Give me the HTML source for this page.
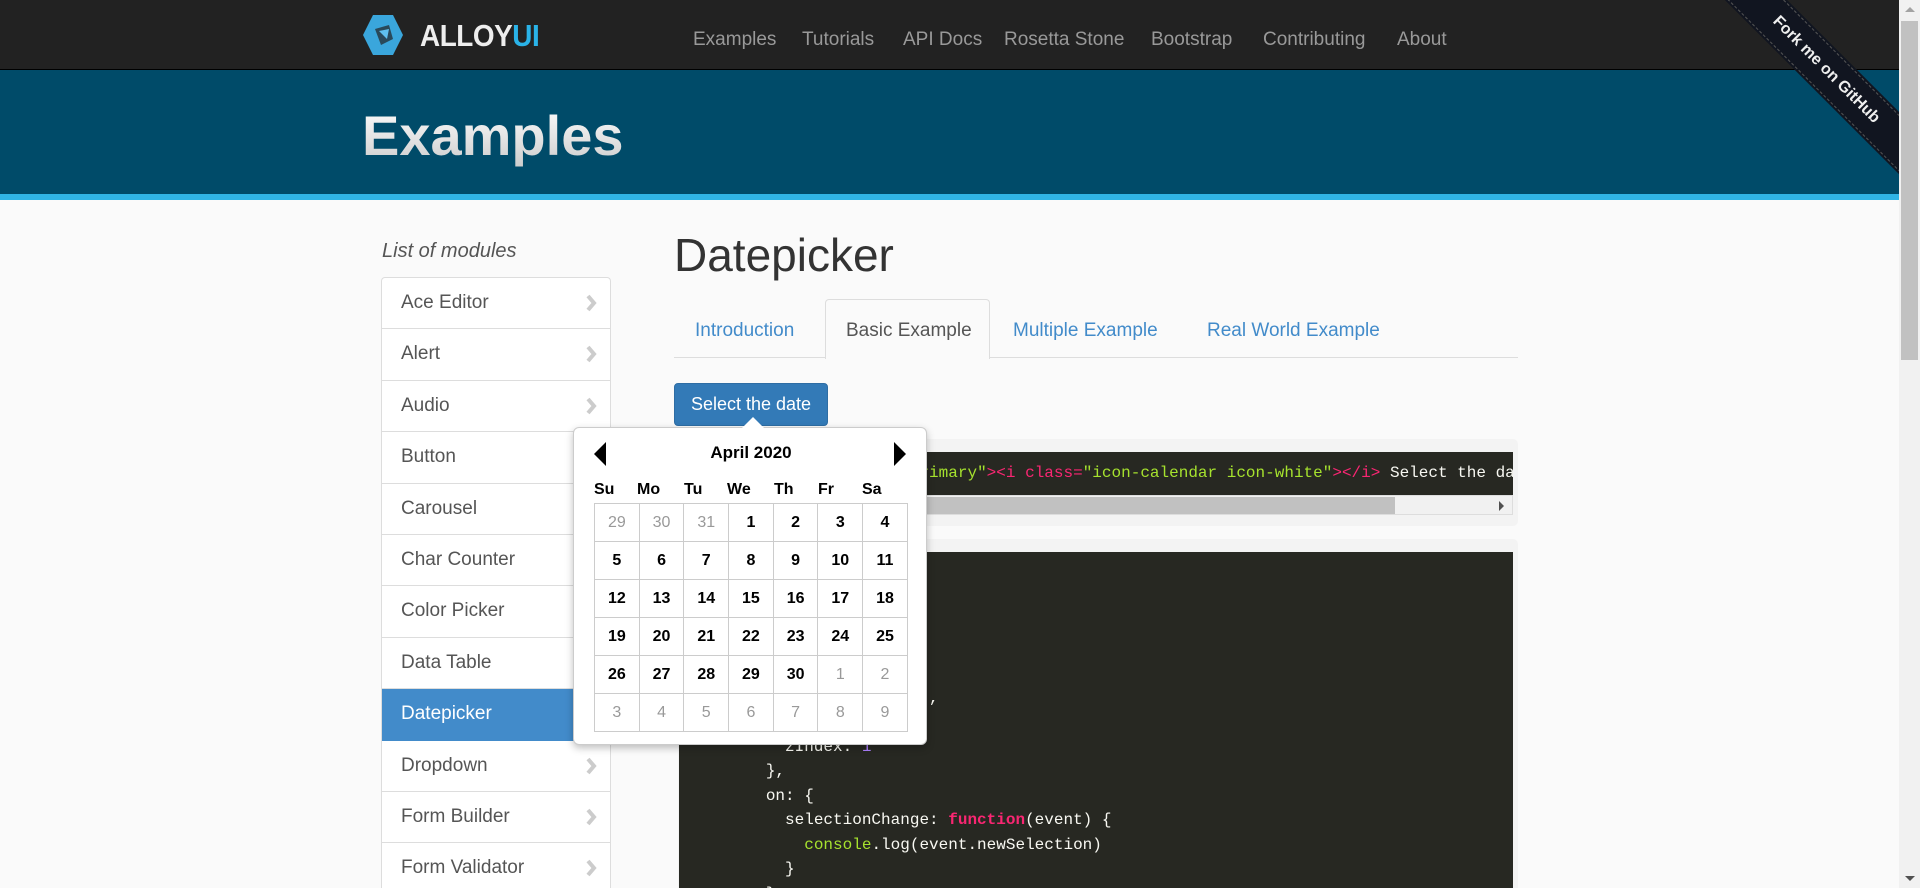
<!DOCTYPE html>
<html style="height:888px;overflow:hidden"><head><meta charset="utf-8">
<style>
*{margin:0;padding:0;box-sizing:border-box}
body{width:1920px;height:888px;overflow:hidden;background:#fafafa;font-family:"Liberation Sans",sans-serif;position:relative}
.abs{position:absolute}
#top{left:0;top:0;width:1899px;height:70px;background:#222;border-bottom:1px solid #000}
#band{left:0;top:70px;width:1899px;height:124px;background:#004b69}
#stripe{left:0;top:194px;width:1899px;height:6px;background:#30b4e5}
.nav{top:29px;font-size:19px;color:#999;white-space:nowrap}
#logo{left:420px;top:18px;font-family:"Liberation Sans Narrow","Liberation Sans",sans-serif;font-weight:bold;font-size:31px;color:#eee;letter-spacing:-0.5px;transform:scaleX(0.9);transform-origin:left}
#h1{left:362px;top:103px;font-size:56px;font-weight:bold;color:#e8e8e8;background:linear-gradient(#fff,#ccc);-webkit-background-clip:text;color:transparent}
#lom{left:382px;top:240px;font-size:20px;font-style:italic;color:#555}
#list{left:381px;top:277px;width:230px;height:611px;background:#fff;border:1px solid #ddd;border-bottom:none;border-radius:4px 4px 0 0;overflow:hidden}
.it{height:51.4px;border-bottom:1px solid #ddd;font-size:19px;color:#555;padding:14px 0 0 19px;position:relative}
.it svg{position:absolute;right:13px;top:16px}
.it.act{background:#428bca;color:#fff;border-color:#428bca}
#title{left:674px;top:228px;font-size:46px;color:#333}
#tabline{left:674px;top:357px;width:844px;height:1px;background:#ddd}
.tab{top:320px;font-size:19px;color:#428bca}
#acttab{left:825px;top:299px;width:165px;height:60px;background:#fafafa;border:1px solid #ddd;border-bottom:none;border-radius:4px 4px 0 0}
#btn{left:674px;top:383px;width:154px;height:43px;background:#337ab7;border:1px solid #2e6da4;border-radius:4px;color:#fff;font-size:18px;text-align:center;line-height:41px}
.box{background:#f3f3f3;border-radius:5px}
.code{background:#272822;font-family:"Liberation Mono",monospace;font-size:16px;color:#f8f8f2;white-space:pre;overflow:hidden}
#cal{left:573px;top:427px;width:354px;height:318px;background:#fff;border:1px solid #ccc;border-radius:6px;box-shadow:0 3px 8px rgba(0,0,0,.25);font-family:"Liberation Sans",sans-serif}
#cal table{position:absolute;left:20px;top:75px;border-collapse:collapse}
#cal td{width:44.7px;height:38px;border:1px solid #ccc;text-align:center;font-weight:bold;font-size:16px;color:#000}
#cal td.g{color:#999;font-weight:normal}
.dn{position:absolute;top:53px;font-weight:bold;font-size:16px}
#scroll{left:1899px;top:0;width:21px;height:888px;background:#f1f1f1}
</style></head><body>
<div id="top" class="abs"></div>
<div id="band" class="abs"></div>
<div id="stripe" class="abs"></div>
<svg class="abs" style="left:361px;top:13px" width="44" height="44" viewBox="0 0 44 44"><polygon points="12,2 32,2 42,22 32,42 12,42 2,22" fill="#3aa6dc"/><path d="M14 16 L28 12 L32 26 L20 32 Z" fill="#222" opacity=".7"/><path d="M18 18 L28 16 L26 26 Z" fill="#5fc0ee"/></svg>
<div id="logo" class="abs">ALLOY<span style="color:#2ab3e8">UI</span></div>
<div class="abs nav" style="left:693px">Examples</div>
<div class="abs nav" style="left:802px">Tutorials</div>
<div class="abs nav" style="left:903px">API Docs</div>
<div class="abs nav" style="left:1004px">Rosetta Stone</div>
<div class="abs nav" style="left:1151px">Bootstrap</div>
<div class="abs nav" style="left:1263px">Contributing</div>
<div class="abs nav" style="left:1397px">About</div>
<div id="h1" class="abs">Examples</div>
<div class="abs" style="left:1700px;top:0;width:199px;height:200px;overflow:hidden">
 <div style="position:absolute;left:-24px;top:50px;width:300px;height:40px;background:#111520;transform:rotate(45deg);border-top:1px dashed #555;border-bottom:1px dashed #555;color:#eee;font-weight:bold;font-size:16px;text-align:center;line-height:38px;box-shadow:0 0 0 2px #111520">Fork me on GitHub</div>
</div>
<div id="lom" class="abs">List of modules</div>
<div id="list" class="abs">
<div class="it">Ace Editor<svg width="12" height="18"><polyline points="3,2 9,9 3,16" fill="none" stroke="#ccc" stroke-width="4"/></svg></div>
<div class="it">Alert<svg width="12" height="18"><polyline points="3,2 9,9 3,16" fill="none" stroke="#ccc" stroke-width="4"/></svg></div>
<div class="it">Audio<svg width="12" height="18"><polyline points="3,2 9,9 3,16" fill="none" stroke="#ccc" stroke-width="4"/></svg></div>
<div class="it">Button<svg width="12" height="18"><polyline points="3,2 9,9 3,16" fill="none" stroke="#ccc" stroke-width="4"/></svg></div>
<div class="it">Carousel<svg width="12" height="18"><polyline points="3,2 9,9 3,16" fill="none" stroke="#ccc" stroke-width="4"/></svg></div>
<div class="it">Char Counter<svg width="12" height="18"><polyline points="3,2 9,9 3,16" fill="none" stroke="#ccc" stroke-width="4"/></svg></div>
<div class="it">Color Picker<svg width="12" height="18"><polyline points="3,2 9,9 3,16" fill="none" stroke="#ccc" stroke-width="4"/></svg></div>
<div class="it">Data Table<svg width="12" height="18"><polyline points="3,2 9,9 3,16" fill="none" stroke="#ccc" stroke-width="4"/></svg></div>
<div class="it act">Datepicker</div>
<div class="it">Dropdown<svg width="12" height="18"><polyline points="3,2 9,9 3,16" fill="none" stroke="#ccc" stroke-width="4"/></svg></div>
<div class="it">Form Builder<svg width="12" height="18"><polyline points="3,2 9,9 3,16" fill="none" stroke="#ccc" stroke-width="4"/></svg></div>
<div class="it">Form Validator<svg width="12" height="18"><polyline points="3,2 9,9 3,16" fill="none" stroke="#ccc" stroke-width="4"/></svg></div>
</div>
<div id="title" class="abs">Datepicker</div>
<div id="tabline" class="abs"></div>
<div id="acttab" class="abs"></div>
<div class="abs tab" style="left:695px">Introduction</div>
<div class="abs tab" style="left:846px;color:#555">Basic Example</div>
<div class="abs tab" style="left:1013px">Multiple Example</div>
<div class="abs tab" style="left:1207px">Real World Example</div>
<div id="btn" class="abs">Select the date</div>

<div class="abs box" style="left:678px;top:439px;width:840px;height:87px"></div>
<div class="abs code" style="left:679px;top:452px;width:834px;height:43px;line-height:43px;padding-left:10px"><span style="color:#f92672">&lt;button</span> <span style="color:#f92672">class=</span><span style="color:#a6e22e">"btn btn-primary"</span><span style="color:#f92672">&gt;&lt;i</span> <span style="color:#f92672">class=</span><span style="color:#a6e22e">"icon-calendar icon-white"</span><span style="color:#f92672">&gt;&lt;/i&gt;</span> Select the da</div>
<div class="abs" style="left:679px;top:495px;width:834px;height:20px;background:#f1f1f1;border:1px solid #ddd"></div>
<div class="abs" style="left:680px;top:497px;width:715px;height:17px;background:#c1c1c1"></div>
<div class="abs" style="left:1499px;top:501px;width:0;height:0;border-left:5px solid #505050;border-top:5px solid transparent;border-bottom:5px solid transparent"></div>

<div class="abs box" style="left:678px;top:539px;width:840px;height:349px;border-radius:5px 5px 0 0"></div>
<div class="abs code" style="left:679px;top:552px;width:834px;height:336px;line-height:24.5px;padding:11px 0 0 10px">YUI().use(
  <span style="color:#e6db74">'aui-datepicker'</span>,
  <span style="color:#f92672;font-weight:bold">function</span>(Y) {
    <span style="color:#f92672">new</span> Y.DatePicker(
      {
        trigger: <span style="color:#e6db74">'button'</span>,
        popover: {
          zIndex: <span style="color:#ae81ff">1</span>
        },
        on: {
          selectionChange: <span style="color:#f92672;font-weight:bold">function</span>(event) {
            <span style="color:#a6e22e">console</span>.log(event.newSelection)
          }
        }</div>

<div id="cal" class="abs">
 <div style="position:absolute;left:168px;top:-11px;width:0;height:0;border-left:11px solid transparent;border-right:11px solid transparent;border-bottom:11px solid #fff"></div>
 <div style="position:absolute;left:20px;top:14px;width:0;height:0;border-right:12px solid #000;border-top:12px solid transparent;border-bottom:12px solid transparent"></div>
 <div style="position:absolute;right:20px;top:14px;width:0;height:0;border-left:12px solid #000;border-top:12px solid transparent;border-bottom:12px solid transparent"></div>
 <div style="position:absolute;left:0;width:354px;top:15px;text-align:center;font-weight:bold;font-size:17px">April 2020</div>
 <div class="dn" style="left:20px">Su</div><div class="dn" style="left:63px">Mo</div><div class="dn" style="left:110px">Tu</div><div class="dn" style="left:153px">We</div><div class="dn" style="left:200px">Th</div><div class="dn" style="left:244px">Fr</div><div class="dn" style="left:288px">Sa</div>
 <table>
 <tr><td class="g">29</td><td class="g">30</td><td class="g">31</td><td>1</td><td>2</td><td>3</td><td>4</td></tr>
 <tr><td>5</td><td>6</td><td>7</td><td>8</td><td>9</td><td>10</td><td>11</td></tr>
 <tr><td>12</td><td>13</td><td>14</td><td>15</td><td>16</td><td>17</td><td>18</td></tr>
 <tr><td>19</td><td>20</td><td>21</td><td>22</td><td>23</td><td>24</td><td>25</td></tr>
 <tr><td>26</td><td>27</td><td>28</td><td>29</td><td>30</td><td class="g">1</td><td class="g">2</td></tr>
 <tr><td class="g">3</td><td class="g">4</td><td class="g">5</td><td class="g">6</td><td class="g">7</td><td class="g">8</td><td class="g">9</td></tr>
 </table>
</div>

<div id="scroll" class="abs">
 <div style="position:absolute;left:2px;top:21px;width:17px;height:339px;background:#c1c1c1"></div>
 <div style="position:absolute;left:6px;top:7px;border-left:5px solid transparent;border-right:5px solid transparent;border-bottom:5px solid #a3a3a3"></div>
 <div style="position:absolute;left:6px;top:876px;border-left:5px solid transparent;border-right:5px solid transparent;border-top:5px solid #505050"></div>
</div>
</body></html>
